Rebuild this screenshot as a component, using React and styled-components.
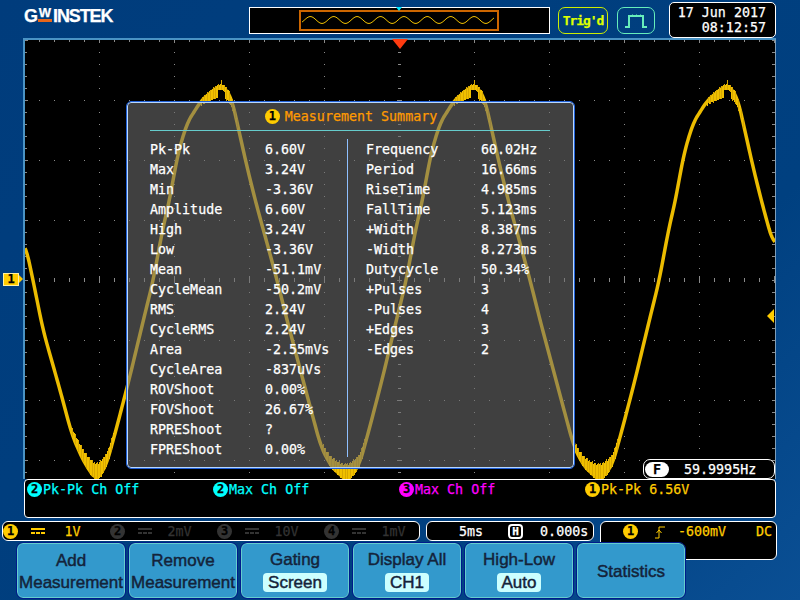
import styled, { createGlobalStyle } from "styled-components"

const Global = createGlobalStyle`
html, body { margin: 0; padding: 0; background: #004080; }
`

const mono = `"DejaVu Sans Mono", "Liberation Mono", monospace`

//STYLES
const Screen = styled.div`
width: 800px;
height: 600px;
overflow: hidden;
display: flex;
flex-direction: column;
background: linear-gradient(135deg, #003c7c 0%, #004080 70%, #0a4f94 100%);
font-family: ${mono};
font-size: 13.33px;
-webkit-text-stroke: 0.25px;
`

const TopBar = styled.div`
height: 38px;
box-sizing: border-box;
display: flex;
align-items: flex-start;
padding: 2px 0 0 24px;
`

const Logo = styled.div`
width: 225px;
height: 30px;
display: flex;
align-items: flex-start;
padding-top: 6px;
box-sizing: border-box;
color: #fff;
font-family: "Liberation Sans", Arial, sans-serif;
font-weight: 700;
font-size: 18px;
line-height: 16px;
`

const LogoG = styled.span`
width: 13px;
`

const LogoMark = styled.div`
width: 16px;
display: flex;
flex-direction: column;
align-items: center;
font-size: 13px;
line-height: 10px;
`

const LogoBar = styled.div`
width: 14px;
height: 3px;
margin-top: 1px;
background: #e8661a;
`

const LogoRest = styled.span`
letter-spacing: -1.1px;
`

const MemoryBar = styled.div`
width: 301px;
height: 27px;
margin-top: 5px;
box-sizing: border-box;
border: 1px solid #fff;
background: #000;
position: relative;
`

const MemoryPointer = styled.div`
position: absolute;
left: 146px;
top: -1px;
width: 0;
height: 0;
border-left: 3px solid transparent;
border-right: 3px solid transparent;
border-top: 4px solid #00e5ff;
`

const Trigd = styled.div`
width: 50px;
height: 27px;
margin: 5px 0 0 8px;
box-sizing: border-box;
border: 1px solid #ccee00;
border-radius: 7px;
color: #ddff00;
font-weight: 700;
font-size: 13px;
display: flex;
align-items: center;
justify-content: center;
letter-spacing: -1.1px;
`

const PulseBox = styled.div`
width: 38px;
height: 27px;
margin: 5px 0 0 9px;
box-sizing: border-box;
border: 1px solid #66eebb;
border-radius: 7px;
display: flex;
align-items: center;
justify-content: center;
`

const DateBox = styled.div`
width: 107px;
height: 36px;
margin-left: 14px;
box-sizing: border-box;
border: 1px solid #fff;
border-radius: 5px;
background: #000;
color: #fff;
padding: 2px 9px 0 0;
text-align: right;
line-height: 15px;
`

const Scope = styled.div`
position: relative;
margin-left: 23px;
width: 753px;
height: 441px;
box-sizing: border-box;
background: #000;
border-top: 2px solid #4a93c4;
border-left: 2px solid #4a93c4;
border-right: 1px solid #7d9db8;
`

const Trace = styled.svg`
position: absolute;
left: 0;
top: 0;
display: block;
`

const TriggerPointer = styled.div`
position: absolute;
left: 367px;
top: -1px;
width: 0;
height: 0;
border-left: 8px solid transparent;
border-right: 8px solid transparent;
border-top: 10px solid #ff3b10;
`

const ChannelFlag = styled.div`
position: absolute;
left: -22px;
top: 233px;
width: 16px;
height: 13px;
box-sizing: border-box;
background: #ffcc00;
border: 1px solid #fff0a0;
color: #000;
font-weight: 700;
font-size: 12px;
line-height: 11px;
text-align: center;
&::after {
  content: "";
  position: absolute;
  left: 15px;
  top: 1px;
  border-top: 4px solid transparent;
  border-bottom: 4px solid transparent;
  border-left: 4px solid #ffcc00;
}
`

const LevelPointer = styled.div`
position: absolute;
right: 1px;
top: 269px;
width: 0;
height: 0;
border-top: 7px solid transparent;
border-bottom: 7px solid transparent;
border-right: 7px solid #ffcc00;
`

const Panel = styled.div`
position: absolute;
left: 102px;
top: 62px;
width: 447px;
height: 366px;
box-sizing: border-box;
padding: 0 22px;
background: rgba(110, 110, 110, 0.58);
border: 1px solid #b8d8ff;
outline: 1px solid #1f5fd8;
border-radius: 4px;
color: #fff;
`

const PanelTitle = styled.div`
height: 27px;
display: flex;
align-items: center;
justify-content: center;
gap: 5px;
padding-left: 1px;
color: #ff9a00;
`

const PanelRule = styled.div`
height: 1px;
width: 400px;
background: #66cccc;
`

const PanelBody = styled.div`
display: grid;
grid-template-columns: 197px 1fr;
margin-top: 8px;
`

const Column = styled.div`
display: grid;
grid-template-columns: 115px 1fr;
grid-auto-rows: 20px;
align-content: start;
align-items: center;
height: 318px;
${p => p.$right && `
  border-left: 1px solid #8fc0ff;
  padding-left: 18px;
`}
`

const Freq = styled.div`
position: absolute;
right: 0;
bottom: 0;
width: 132px;
height: 20px;
box-sizing: border-box;
border: 1px solid #fff;
border-radius: 7px;
background: #000;
color: #fff;
display: flex;
align-items: center;
padding-left: 1px;
`

const FreqTag = styled.span`
width: 24px;
height: 15px;
border-radius: 8px;
background: #fff;
color: #000;
font-weight: 700;
text-align: center;
line-height: 15px;
margin-right: 15px;
`

const Strip = styled.div`
margin-left: 24px;
width: 752px;
height: 39px;
box-sizing: border-box;
border: 1px solid #fff;
border-radius: 4px;
background: #000;
display: grid;
grid-template-columns: repeat(4, 186px);
padding: 1px 0 0 2px;
`

const StripItem = styled.div`
display: flex;
align-items: center;
gap: 1px;
height: 16px;
color: ${p => p.$color};
`

const Badge = styled.span`
flex: none;
width: 15px;
height: 15px;
border-radius: 50%;
background: ${p => p.$color};
color: #000;
font-weight: 700;
font-size: 12px;
line-height: 15px;
text-align: center;
`

const StatusRow = styled.div`
height: 21px;
display: flex;
gap: 6px;
margin-top: 3px;
padding-left: 2px;
`

const ChannelBox = styled.div`
width: 418px;
height: 20px;
box-sizing: border-box;
border: 1px solid #fff;
border-radius: 6px;
background: #000;
display: grid;
grid-template-columns: repeat(4, 107px);
align-items: center;
`

const ChannelItem = styled.div`
display: flex;
align-items: center;
color: ${p => p.$color};
`

const DcSign = styled.svg`
margin-left: 13px;
flex: none;
display: block;
`

const ChannelValue = styled.span`
width: 25px;
margin-left: 15px;
text-align: center;
white-space: nowrap;
`

const TimeBox = styled.div`
width: 168px;
height: 20px;
box-sizing: border-box;
border: 1px solid #fff;
border-radius: 6px;
background: #000;
color: #fff;
display: flex;
align-items: center;
padding-left: 32px;
`

const HTag = styled.span`
width: 15px;
height: 15px;
box-sizing: border-box;
margin: 0 17px 0 25px;
border: 2px solid #fff;
border-radius: 4px;
background: #000;
color: #fff;
font-weight: 700;
font-size: 11px;
line-height: 11px;
text-align: center;
`

const TrigBox = styled.div`
width: 177px;
height: 39px;
box-sizing: border-box;
border: 1px solid #fff;
border-radius: 6px;
background: #000;
color: #ffcc00;
display: flex;
align-items: flex-start;
padding: 2px 4px 0 22px;
`

const EdgeIcon = styled.svg`
flex: none;
margin: 2px 0 0 17px;
display: block;
`

const TrigLevel = styled.span`
margin-left: 13px;
flex: 1;
`

const Keys = styled.div`
position: relative;
z-index: 1;
display: flex;
gap: 4px;
padding: 1px 0 0 17px;
`

const Key = styled.div`
width: 108px;
height: 55px;
box-sizing: border-box;
border: 1px solid #66cccc;
outline: 1px solid #001a8c;
border-radius: 6px;
background: #3399cc;
color: #14233a;
font-family: "Liberation Sans", Arial, sans-serif;
font-size: 17px;
-webkit-text-stroke: 0.45px;
display: flex;
flex-direction: column;
align-items: center;
justify-content: center;
line-height: 22px;
white-space: nowrap;
padding-top: ${p => (p.$pill ? 0 : 2)}px;
`

const KeyValue = styled.span`
background: #ccffff;
border-radius: 4px;
padding: 0 5px;
line-height: 19px;
margin-top: 2px;
`
//END STYLES

const LEFT_ROWS = [
  ["Pk-Pk", "6.60V"], ["Max", "3.24V"], ["Min", "-3.36V"], ["Amplitude", "6.60V"],
  ["High", "3.24V"], ["Low", "-3.36V"], ["Mean", "-51.1mV"], ["CycleMean", "-50.2mV"],
  ["RMS", "2.24V"], ["CycleRMS", "2.24V"], ["Area", "-2.55mVs"], ["CycleArea", "-837uVs"],
  ["ROVShoot", "0.00%"], ["FOVShoot", "26.67%"], ["RPREShoot", "?"], ["FPREShoot", "0.00%"],
]

const RIGHT_ROWS = [
  ["Frequency", "60.02Hz"], ["Period", "16.66ms"], ["RiseTime", "4.985ms"], ["FallTime", "5.123ms"],
  ["+Width", "8.387ms"], ["-Width", "8.273ms"], ["Dutycycle", "50.34%"], ["+Pulses", "3"],
  ["-Pulses", "4"], ["+Edges", "3"], ["-Edges", "2"],
]

const STRIP = [
  ["2", "#00ffff", "Pk-Pk Ch Off"],
  ["2", "#00ffff", "Max Ch Off"],
  ["3", "#ff00ff", "Max Ch Off"],
  ["1", "#ffcc00", "Pk-Pk 6.56V"],
]

const CHANNELS = [
  ["1", "#ffcc00", "#ffcc00", "1V"],
  ["2", "#333", "#333", "2mV"],
  ["3", "#333", "#333", "10V"],
  ["4", "#333", "#333", "1mV"],
]

const KEYS = [
  ["Add", "Measurement"],
  ["Remove", "Measurement"],
  ["Gating", null, "Screen"],
  ["Display All", null, "CH1"],
  ["High-Low", null, "Auto"],
  ["Statistics"],
]

// one period of the trace, [px after the peak, screen y]
const SHAPE = [[0,85],[10,96],[16,122],[26,167],[36,207],[46,243],[56,280],[66,320],[78,365],[90,410],[100,447],[110,466],[125,480],[138,466],[148,430],[161,380],[173,330],[186,277],[193,237],[203,193],[209,157],[219,123],[233,101],[246,90],[253,85]]

const buildTrace = () => {
  const pts = [[25,243],[33,280],[43,330],[60,390],[72,435],[84,462],[96,480]]
  ;[-32, 221, 474].forEach((peak, n) => {
    SHAPE.forEach(([dx, y]) => {
      if (n === 0 && dx <= 128) return
      if (dx === 0 && n > 0) return
      pts.push([peak + dx, y])
    })
  })
  SHAPE.forEach(([dx, y]) => { if (dx > 0 && 727 + dx <= 775) pts.push([727 + dx, y]) })
  return pts
}

const RAW = buildTrace()

const rawY = x => {
  for (let i = 1; i < RAW.length; i++) {
    const [x0, y0] = RAW[i - 1]
    const [x1, y1] = RAW[i]
    if (x <= x1) return y0 + ((y1 - y0) * (x - x0)) / (x1 - x0)
  }
  return RAW[RAW.length - 1][1]
}

// box filter so the table corners don't show
const yAt = x => {
  let sum = 0
  for (let d = -4; d <= 4; d++) sum += rawY(Math.max(25, Math.min(773, x + d)))
  return sum / 9
}

const noise = i => ((i * 37 + 5) % 11) / 11

const range = (from, to, step) => {
  const out = []
  for (let v = from; v <= to; v += step) out.push(v)
  return out
}

const TRACE = range(25, 775, 1).map(x => [x, yAt(x)])

// the noisy band on the tops and bottoms of the wave
const bands = []
;[221, 474, 727].forEach(peak => {
  for (let x = peak - 20; x <= peak + 17; x++) {
    const off = Math.abs(x - peak)
    const t = 1 - off / 21
    const y = yAt(x)
    const up = 2 + noise(x) * 2 + (x === peak ? 3 : 0)
    const down = off < 4 ? 3 : 2 + t * 9 + noise(x + 3) * 2
    bands.push([x, y - up, y + down, noise(x) > 0.6 ? "#d9a800" : "#f0c000"])
  }
})
;[96, 347, 600].forEach(trough => {
  for (let x = trough - 24; x <= trough + 17; x++) {
    const t = 1 - Math.abs(x - trough) / 26
    const y = yAt(x)
    bands.push([x, y - 3 - t * 10 - noise(x) * 3, y + 2 + noise(x + 2) * 2, noise(x) > 0.6 ? "#d9a800" : "#f0c000"])
  }
})

const Graticule = () => {
  const dots = []
  range(99, 774, 75).forEach(x => range(40, 478, 12).forEach(y => dots.push([x, y])))
  range(100, 460, 60).forEach(y => range(24, 774, 15).forEach(x => dots.push([x, y])))
  return (
    <g fill="#8a8a8a" shapeRendering="crispEdges">
      {dots.map(([x, y]) => <rect key={x + "-" + y} x={x} y={y} width="1" height="1" />)}
      {range(24, 774, 15).map(x => <rect key={"t" + x} x={x} y="40" width="1" height={(x - 24) % 75 ? 2 : 3} />)}
      {range(40, 478, 12).map(y => <rect key={"l" + y} x="25" y={y} width={(y - 40) % 60 ? 2 : 3} height="1" />)}
      {range(40, 478, 12).map(y => <rect key={"r" + y} x="772" y={y} width={(y - 40) % 60 ? 2 : 3} height="1" />)}
      {range(24, 774, 15).map(x => <rect key={"c" + x} x={x} y={(x - 24) % 75 ? 278 : 276} width="1" height={(x - 24) % 75 ? 4 : 7} />)}
      {range(52, 478, 12).map(y => (
        <rect key={"v" + y} x={(y - 40) % 60 ? 398 : 397} y={y} width={(y - 40) % 60 ? 3 : 5} height="1" />
      ))}
    </g>
  )
}

const MemoryWave = () => {
  const pts = range(0, 192, 2).map(x => `${x + 3},${10 + 3.5 * Math.cos(((x - 20) / 23.4) * 2 * Math.PI)}`)
  return (
    <svg width="200" height="21" style={{ position: "absolute", left: 49, top: 2 }}>
      <rect x="1" y="1" width="198" height="19" fill="none" stroke="#cc6600" strokeWidth="2" />
      <polyline points={pts.join(" ")} fill="none" stroke="#f0c000" strokeWidth="1" />
    </svg>
  )
}

const Row = ({ label, value }) => (
  <>
    <span>{label}</span>
    <span>{value}</span>
  </>
)

const App = () => {
  return (
    <>
      <Global />
      <Screen>
        <TopBar>
          <Logo>
            <LogoG>G</LogoG>
            <LogoMark>
              W
              <LogoBar />
            </LogoMark>
            <LogoRest>INSTEK</LogoRest>
          </Logo>
          <MemoryBar>
            <MemoryWave />
            <MemoryPointer />
          </MemoryBar>
          <Trigd>Trig'd</Trigd>
          <PulseBox>
            <svg width="24" height="16" viewBox="0 0 24 16">
              <path d="M1 14h4V3h14v11h4" fill="none" stroke="#66eebb" strokeWidth="2" />
              <path d="M8 2h1M12 2h1M16 2h1" stroke="#66eebb" strokeWidth="1" />
            </svg>
          </PulseBox>
          <DateBox>
            17 Jun 2017
            <br />
            08:12:57
          </DateBox>
        </TopBar>

        <Scope>
          <Trace width="750" height="439" viewBox="25 40 750 439">
            <Graticule />
            <polyline
              points={TRACE.map(p => p.join(",")).join(" ")}
              fill="none"
              stroke="#ecbc00"
              strokeWidth="3.5"
              strokeLinejoin="round"
            />
            <g shapeRendering="crispEdges">
              {bands.map(([x, y0, y1, c]) => (
                <rect key={x} x={x} y={y0} width="1" height={y1 - y0} fill={c} />
              ))}
            </g>
          </Trace>
          <TriggerPointer />
          <ChannelFlag>1</ChannelFlag>
          <LevelPointer />
          <Panel>
            <PanelTitle>
              <Badge $color="#ffcc00">1</Badge>
              Measurement Summary
            </PanelTitle>
            <PanelRule />
            <PanelBody>
              <Column>
                {LEFT_ROWS.map(([l, v]) => <Row key={l} label={l} value={v} />)}
              </Column>
              <Column $right>
                {RIGHT_ROWS.map(([l, v]) => <Row key={l} label={l} value={v} />)}
              </Column>
            </PanelBody>
          </Panel>
          <Freq>
            <FreqTag>F</FreqTag>
            59.9995Hz
          </Freq>
        </Scope>

        <Strip>
          {STRIP.map(([n, color, text], i) => (
            <StripItem key={i} $color={color}>
              <Badge $color={color}>{n}</Badge>
              {text}
            </StripItem>
          ))}
        </Strip>

        <StatusRow>
          <ChannelBox>
            {CHANNELS.map(([n, badge, color, value]) => (
              <ChannelItem key={n} $color={color}>
                <Badge $color={badge}>{n}</Badge>
                <DcSign width="14" height="6" viewBox="0 0 14 6">
                  <rect width="14" height="2" fill={color} />
                  <rect y="4" width="4" height="2" fill={color} />
                  <rect x="5" y="4" width="4" height="2" fill={color} />
                  <rect x="10" y="4" width="4" height="2" fill={color} />
                </DcSign>
                <ChannelValue>{value}</ChannelValue>
              </ChannelItem>
            ))}
          </ChannelBox>
          <TimeBox>
            5ms
            <HTag>H</HTag>
            0.000s
          </TimeBox>
          <TrigBox>
            <Badge $color="#ffcc00">1</Badge>
            <EdgeIcon width="10" height="13" viewBox="0 0 10 13">
              <path d="M0 12h4V1h6M1.5 7L4 4l2.5 3" fill="none" stroke="#ffcc00" strokeWidth="1" />
            </EdgeIcon>
            <TrigLevel>-600mV</TrigLevel>
            DC
          </TrigBox>
        </StatusRow>

        <Keys>
          {KEYS.map(([a, b, v]) => (
            <Key key={a} $pill={!!v}>
              <span>{a}</span>
              {b && <span>{b}</span>}
              {v && <KeyValue>{v}</KeyValue>}
            </Key>
          ))}
        </Keys>
      </Screen>
    </>
  )
}

export default App
